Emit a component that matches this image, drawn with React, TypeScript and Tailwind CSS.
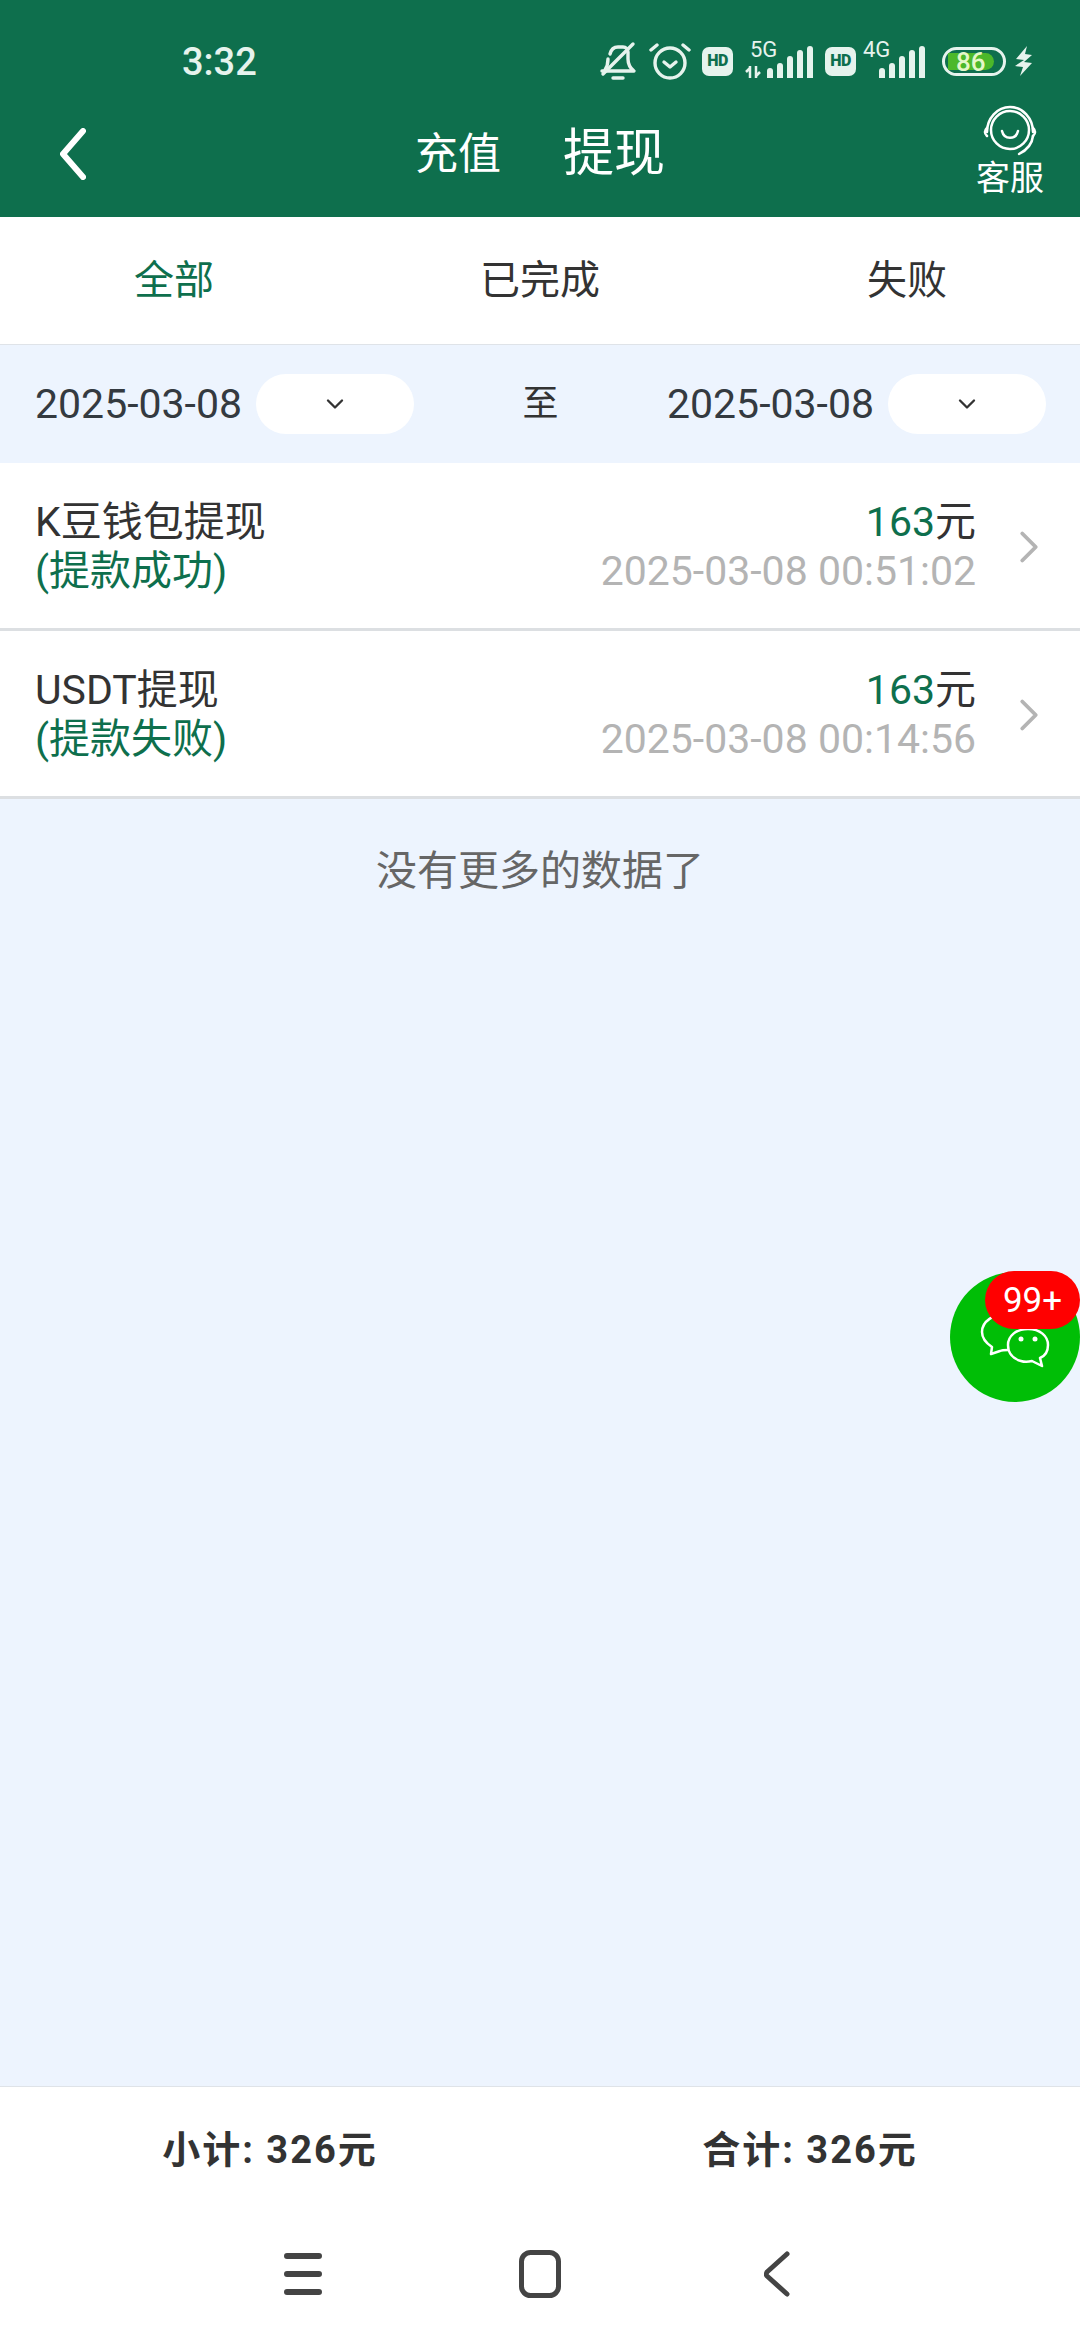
import { ChevronDown, ChevronRight } from "lucide-react";

const font = "font-['Roboto','Noto_Sans_CJK_SC',sans-serif]";

function Bars({ count }: { count: number }) {
  const heights = [10, 15, 22, 28, 32, 32].slice(0, count);
  return (
    <div className="flex items-end gap-[4px]">
      {heights.map((h, i) => (
        <div key={i} className="w-[6px] rounded-t-[3px] bg-[#e6f3ed]" style={{ height: h }} />
      ))}
    </div>
  );
}

function Hd() {
  return (
    <div className="flex h-[29px] w-[31px] items-center justify-center rounded-[7px] bg-[#e6f3ed] text-[16px] leading-none font-black tracking-[-0.5px] text-[#0e6f4d]">
      HD
    </div>
  );
}

function StatusBar() {
  return (
    <div className="flex h-[92px] items-start pt-[41px] text-[#e6f3ed]">
      <div className="ml-[182px] text-[38px] leading-[42px] font-medium">3:32</div>
      <div className="ml-auto mr-[46px] flex h-[40px] items-center">
        {/* bell off */}
        <svg width="38" height="40" viewBox="0 0 38 40" fill="none" stroke="#e6f3ed" strokeWidth="3.4" strokeLinecap="round" strokeLinejoin="round">
          <path d="M11 13c1-4 4-7 8-7h5c3 0 5 2 5 5v7c0 5 2 9 6 12H3" />
          <path d="M9 18c0 4-1 8-3 11" />
          <path d="M4 33L34 3" />
          <path d="M14 37h10" />
        </svg>
        {/* alarm */}
        <svg className="ml-[12px]" width="42" height="40" viewBox="0 0 42 40" fill="none" stroke="#e6f3ed" strokeWidth="3.4" strokeLinecap="round" strokeLinejoin="round">
          <circle cx="21" cy="22" r="15" />
          <path d="M15 21l6 5 6-5" />
          <path d="M2 9l6-5M40 9l-6-5" />
        </svg>
        <div className="ml-[11px]"><Hd /></div>
        {/* 5G */}
        <div className="relative ml-[12px] h-[40px] w-[68px]">
          <span className="absolute left-[5px] top-[-3px] text-[22px] leading-[24px] text-[#e6f3ed]">5G</span>
          <svg className="absolute bottom-[3px] left-0" width="16" height="12" viewBox="0 0 16 12" fill="none" stroke="#e6f3ed" strokeWidth="2.5">
            <path d="M5 0v12M1 6l4-4M11 0v12M15 6l-4 4" />
          </svg>
          <div className="absolute bottom-[3px] right-0"><Bars count={5} /></div>
        </div>
        <div className="ml-[12px]"><Hd /></div>
        {/* 4G */}
        <div className="relative ml-[7px] h-[40px] w-[62px]">
          <span className="absolute left-0 top-[-3px] text-[22px] leading-[24px] text-[#e6f3ed]">4G</span>
          <div className="absolute bottom-[3px] right-0"><Bars count={5} /></div>
        </div>
        {/* battery */}
        <div className="relative ml-[17px] flex h-[29px] w-[64px] items-center rounded-full border-[3px] border-[#e6f3ed] p-[3px]">
          <div className="h-full w-[46px] rounded-r-full rounded-l-[3px] bg-[#4cb82a]" />
          <span className="absolute left-[11px] top-[-3px] text-[26px] leading-[30px] font-medium text-[#e4f7c8]">86</span>
        </div>
        {/* bolt */}
        <svg className="ml-[8px]" width="20" height="30" viewBox="0 0 20 30" fill="#e6f3ed">
          <path d="M13 0L2 13l8 1-9 6 8 1-3 9 12-13-8-1 8-7-7-1z" />
        </svg>
      </div>
    </div>
  );
}

function Header() {
  return (
    <div className="h-[217px] shrink-0 bg-[#0e6f4d]">
      <StatusBar />
      <div className="grid h-[125px] grid-cols-[1fr_auto_1fr] items-start">
        <div className="pl-[60px] pt-[36px]">
          <svg width="26" height="52" viewBox="0 0 26 52" fill="none" stroke="#ffffff" strokeWidth="6" strokeLinecap="round" strokeLinejoin="round">
            <path d="M23 3L3 26l20 23" />
          </svg>
        </div>
        <div className="flex items-center pt-[29px] text-white">
          <span className="text-[43px] leading-[66px]">充值</span>
          <span className="ml-[62px] text-[51px] leading-[66px]">提现</span>
        </div>
        <div className="flex flex-col items-end pr-[36px] pt-[12px] text-white">
          <svg className="mr-[6px]" width="56" height="52" viewBox="0 0 56 52" fill="none" stroke="#ffffff" strokeWidth="2.5" strokeLinecap="round">
            <circle cx="28" cy="26" r="19" />
            <path d="M5 28a23 25 0 0 1 46 0" />
            <path d="M5 24c-3 3-3 5 0 8M51 24c3 3 3 5 0 8" />
            <path d="M20 27c2 9 14 9 16 0" />
            <path d="M51 32c-1 9-6 14-14 18" />
          </svg>
          <span className="mt-[2px] text-[34px] leading-[40px]">客服</span>
        </div>
      </div>
    </div>
  );
}

function Tabs() {
  const tabs = ["全部", "已完成", "失败"];
  return (
    <div className="grid h-[128px] shrink-0 grid-cols-3 items-center border-b border-[#dfe3e8] bg-white text-center text-[40px]">
      {tabs.map((t, i) => (
        <span key={t} className={i === 0 ? "pr-[12px] text-[#0e6f4d]" : i === 2 ? "pl-[14px] text-[#333333]" : "text-[#333333]"}>
          {t}
        </span>
      ))}
    </div>
  );
}

function DatePick() {
  return (
    <div className="flex items-center gap-[14px]">
      <span className="text-[41px] leading-none text-[#343a40]">2025-03-08</span>
      <div className="flex h-[60px] w-[158px] items-center justify-center rounded-full bg-white">
        <ChevronDown size={28} strokeWidth={2} color="#333333" />
      </div>
    </div>
  );
}

function DateBar() {
  return (
    <div className="flex h-[118px] shrink-0 items-center justify-between pl-[35px] pr-[34px]">
      <DatePick />
      <span className="text-[36px] text-[#333333]">至</span>
      <DatePick />
    </div>
  );
}

function Row({ title, status, time }: { title: string; status: string; time: string }) {
  return (
    <div className="flex h-[168px] items-center border-b-[3px] border-[#dcdfe2] bg-white pl-[35px] pr-[40px] pt-[2px]">
      <div className="flex-1">
        <div className="text-[41px] leading-[49px] text-[#333333]">{title}</div>
        <div className="text-[41px] leading-[49px] text-[#0e6f4d]">{status}</div>
      </div>
      <div className="text-right">
        <div className="text-[41px] leading-[49px] text-[#333333]">
          <span className="text-[#0e6f4d]">163</span>元
        </div>
        <div className="text-[41px] leading-[49px] text-[#b4b4b4]">{time}</div>
      </div>
      <ChevronRight className="ml-[26px] mr-[-16px]" size={54} strokeWidth={1.7} color="#b4b4b4" />
    </div>
  );
}

function FloatChat() {
  return (
    <div className="absolute right-0 top-[1272px] h-[130px] w-[130px] rounded-full bg-[#00be06]">
      <svg className="absolute left-[30px] top-[40px]" width="72" height="62" viewBox="0 0 72 62" fill="none" stroke="#ffffff" strokeWidth="2.5" strokeLinejoin="round">
        <path d="M28 38c-3 0-6 0-8 1l-9 3 1-7C6 31 2 26 2 20 2 9 14 2 26 2" />
        <g transform="translate(3 -1)">
          <path d="M49 50c-4 1-8 1-11 0-8-2-13-8-13-16 0-9 8-16 20-16s20 7 20 16c0 6-3 11-8 13l2 8z" />
          <circle cx="38" cy="28" r="2.5" fill="#ffffff" stroke="none" />
          <circle cx="52" cy="28" r="2.5" fill="#ffffff" stroke="none" />
        </g>
      </svg>
      <div className="absolute right-0 top-[-1px] flex h-[58px] w-[95px] items-center justify-center rounded-full bg-[#ff0000] text-[35px] leading-none text-white">
        99+
      </div>
    </div>
  );
}

function Footer() {
  return (
    <div className="shrink-0 border-t border-[#dfe3e8] bg-white">
      <div className="grid h-[125px] grid-cols-2 items-center pt-[2px] text-center text-[38px] font-bold tracking-[2px] text-[#333333]">
        <span>小计: 326元</span>
        <span>合计: 326元</span>
      </div>
      <div className="flex h-[128px] items-start pl-[284px] pt-[41px]">
        <svg width="38" height="42" viewBox="0 0 38 42" fill="none" stroke="#444444" strokeWidth="6" strokeLinecap="round">
          <path d="M3 3h32M3 21h32M3 39h32" />
        </svg>
        <svg className="ml-[197px] mt-[-3px]" width="42" height="48" viewBox="0 0 42 48" fill="none" stroke="#444444" strokeWidth="5">
          <rect x="2.5" y="2.5" width="37" height="43" rx="9" />
        </svg>
        <svg className="ml-[203px] mt-[-2px]" width="26" height="46" viewBox="0 0 26 46" fill="none" stroke="#444444" strokeWidth="5" strokeLinecap="round" strokeLinejoin="round">
          <path d="M23 3L3 21c-1 2-1 3 0 4l20 18" />
        </svg>
      </div>
    </div>
  );
}

export default function App() {
  return (
    <div className={`${font} relative flex h-[2340px] w-[1080px] flex-col overflow-hidden bg-[#edf4fe]`}>
      <Header />
      <Tabs />
      <DateBar />
      <Row title="K豆钱包提现" status="(提款成功)" time="2025-03-08 00:51:02" />
      <Row title="USDT提现" status="(提款失败)" time="2025-03-08 00:14:56" />
      <div className="flex-1 pt-[47px] text-center text-[41px] leading-[50px] text-[#666666]">没有更多的数据了</div>
      <Footer />
      <FloatChat />
    </div>
  );
}
